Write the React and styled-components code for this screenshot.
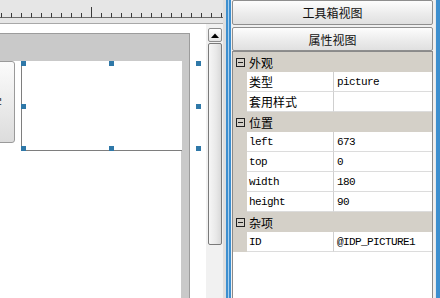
import React from "react";
import styled, { createGlobalStyle } from "styled-components";

const GlobalStyle = createGlobalStyle`
  html, body { margin: 0; padding: 0; }
  body {
    width: 440px;
    height: 298px;
    overflow: hidden;
    background: #ececec;
    font-family: "Noto Sans CJK SC", "Liberation Sans", sans-serif;
  }
`;

const Window = styled.div`
  display: flex;
  width: 440px;
  height: 298px;
  overflow: hidden;
`;

const LeftPane = styled.div`
  display: flex;
  width: 226px;
  background: #e4e4e4;
`;

const DesignArea = styled.div`
  display: flex;
  flex-direction: column;
  width: 223px;
`;

const Ruler = styled.div`
  height: 24px;
  flex: none;
  background: #e6e6e6;
  border-bottom: 1px solid #a8a8a8;
  box-sizing: border-box;
`;

const Body = styled.div`
  display: flex;
  flex: 1;
  min-height: 0;
`;

const Canvas = styled.div`
  position: relative;
  width: 206px;
  background: #ffffff;
  overflow: hidden;
`;

const Frame = styled.div`
  position: absolute;
  left: -10px;
  top: 9px;
  width: 200px;
  height: 400px;
  box-sizing: border-box;
  background: #c9c9c9;
  border: 1px solid #9c9c9c;
`;

const FrameClient = styled.div`
  position: absolute;
  left: 0;
  top: 27px;
  width: 190px;
  bottom: 0;
  background: #ffffff;
`;

const PushButton = styled.div`
  position: absolute;
  left: -40px;
  top: 37px;
  width: 55px;
  height: 82px;
  box-sizing: border-box;
  border: 1px solid #9a9a9a;
  border-radius: 3px;
  background: linear-gradient(#fbfbfb, #e9e9e9 60%, #dcdcdc);
  display: flex;
  align-items: center;
  justify-content: flex-end;
  padding-right: 12px;
  font-size: 12px;
  color: #222;
  overflow: hidden;
  white-space: nowrap;
`;

const Picture = styled.div`
  position: absolute;
  left: 21px;
  top: 37px;
  width: 161px;
  height: 90px;
  box-sizing: border-box;
  background: #ffffff;
  border-left: 1px solid #7e7e7e;
  border-bottom: 1px solid #7e7e7e;
`;

const Handle = styled.div`
  position: absolute;
  width: 5px;
  height: 5px;
  background: #2f78a8;
`;

const ScrollTrack = styled.div`
  width: 17px;
  background: #f1f1f1;
  display: flex;
  flex-direction: column;
  align-items: center;
  padding-top: 4px;
  box-sizing: border-box;
`;

const ArrowButton = styled.div`
  width: 14px;
  height: 14px;
  box-sizing: border-box;
  border: 1px solid #8c8c8c;
  border-radius: 2px;
  background: linear-gradient(#ffffff, #e4e4e4);
  display: flex;
  align-items: center;
  justify-content: center;
`;

const Thumb = styled.div`
  margin-top: 1px;
  width: 14px;
  height: 202px;
  box-sizing: border-box;
  border: 1px solid #7a7a7a;
  border-radius: 2px;
  background: linear-gradient(90deg, #f6f6f6, #e8e8e8 60%, #d9d9d9);
`;

const SideGap = styled.div`
  width: 3px;
  background: #dedede;
`;

const Splitter = styled.div`
  width: 5px;
  background: linear-gradient(90deg, #3d8fcf 0 2px, #a9d0ee 2px 3px, #3d8fcf 3px 5px);
`;

const RightPane = styled.div`
  display: flex;
  flex-direction: column;
  width: 204px;
  padding: 0 2px 0 1px;
  box-sizing: border-box;
  background: #f0f0f0;
`;

const RightEdge = styled.div`
  width: 5px;
  background: linear-gradient(90deg, #e8e8e8 0 1px, #3d8fcf 1px 5px);
`;

const ViewButton = styled.div`
  height: ${(p) => p.h}px;
  margin-bottom: ${(p) => p.gap}px;
  flex: none;
  box-sizing: border-box;
  border: 1px solid #8e8e8e;
  border-radius: 2px;
  background: linear-gradient(#fdfdfd, #ececec 55%, #e0e0e0);
  display: flex;
  align-items: center;
  justify-content: center;
  font-size: 12px;
  color: #111;
`;

const Grid = styled.div`
  flex: 1;
  border: 1px solid #8a8a8a;
  border-bottom: none;
  background: #ffffff;
  display: flex;
  flex-direction: column;
`;

const CategoryRow = styled.div`
  height: 20px;
  display: flex;
  align-items: center;
  background: #d4d0c8;
  font-size: 12px;
  color: #000;
`;

const Collapse = styled.div`
  width: 9px;
  height: 9px;
  margin: 0 4px 0 3px;
  box-sizing: border-box;
  border: 1px solid #222;
  position: relative;
  &::after {
    content: "";
    position: absolute;
    left: 1px;
    right: 1px;
    top: 3px;
    height: 1px;
    background: #222;
  }
`;

const PropRow = styled.div`
  height: 20px;
  display: grid;
  grid-template-columns: 14px 86px 1fr;
  box-sizing: border-box;
`;

const Gutter = styled.div`
  background: #d4d0c8;
`;

const Cell = styled.div`
  display: flex;
  align-items: center;
  box-sizing: border-box;
  border-bottom: 1px solid #dcdcdc;
  padding-left: ${(p) => (p.value ? 3 : 2)}px;
  border-left: ${(p) => (p.value ? "1px solid #cfcfcf" : "none")};
  font-family: ${(p) =>
    p.mono
      ? '"Liberation Mono", "Noto Sans CJK SC", monospace'
      : '"Noto Sans CJK SC", "Liberation Sans", sans-serif'};
  font-size: ${(p) => (p.mono ? "11px" : "12px")};
  letter-spacing: ${(p) => (p.mono ? "-0.6px" : "0")};
  color: #000;
  white-space: nowrap;
  overflow: hidden;
`;

const RulerTicks = () => {
  const ticks = [];
  for (let k = 0; k <= 22; k++) {
    const x = 1.5 + k * 10;
    ticks.push(
      <line key={k} x1={x} x2={x} y1={k === 9 ? 7 : 13} y2={17.5} stroke="#3a3a3a" strokeWidth="1" />
    );
  }
  return (
    <svg width="223" height="23" style={{ display: "block" }}>
      <line x1="0" x2="223" y1="17.5" y2="17.5" stroke="#6a6a6a" strokeWidth="1" />
      {ticks}
    </svg>
  );
};

const handles = [
  [21, 37], [109, 37], [196, 37],
  [21, 80], [196, 80],
  [21, 122], [109, 122], [196, 122],
];

const sections = [
  {
    title: "外观",
    rows: [
      { name: "类型", value: "picture", mono: false },
      { name: "套用样式", value: "", mono: false },
    ],
  },
  {
    title: "位置",
    rows: [
      { name: "left", value: "673", mono: true },
      { name: "top", value: "0", mono: true },
      { name: "width", value: "180", mono: true },
      { name: "height", value: "90", mono: true },
    ],
  },
  {
    title: "杂项",
    rows: [{ name: "ID", value: "@IDP_PICTURE1", mono: true }],
  },
];

export default function App() {
  return (
    <>
      <GlobalStyle />
      <Window>
        <LeftPane>
          <DesignArea>
            <Ruler>
              <RulerTicks />
            </Ruler>
            <Body>
              <Canvas>
                <Frame>
                  <FrameClient />
                </Frame>
                <PushButton>文字</PushButton>
                <Picture />
                {handles.map(([x, y], i) => (
                  <Handle key={i} style={{ left: x, top: y }} />
                ))}
              </Canvas>
              <ScrollTrack>
                <ArrowButton>
                  <svg width="8" height="5" viewBox="0 0 8 5">
                    <polygon points="0,5 4,0.5 8,5" fill="#000" />
                  </svg>
                </ArrowButton>
                <Thumb />
              </ScrollTrack>
            </Body>
          </DesignArea>
          <SideGap />
        </LeftPane>
        <Splitter />
        <RightPane>
          <ViewButton h={25} gap={2}>工具箱视图</ViewButton>
          <ViewButton h={24} gap={0}>属性视图</ViewButton>
          <Grid>
            {sections.map((s) => (
              <React.Fragment key={s.title}>
                <CategoryRow>
                  <Collapse />
                  {s.title}
                </CategoryRow>
                {s.rows.map((r) => (
                  <PropRow key={r.name}>
                    <Gutter />
                    <Cell mono={r.mono}>{r.name}</Cell>
                    <Cell value mono>{r.value}</Cell>
                  </PropRow>
                ))}
              </React.Fragment>
            ))}
          </Grid>
        </RightPane>
        <RightEdge />
      </Window>
    </>
  );
}
